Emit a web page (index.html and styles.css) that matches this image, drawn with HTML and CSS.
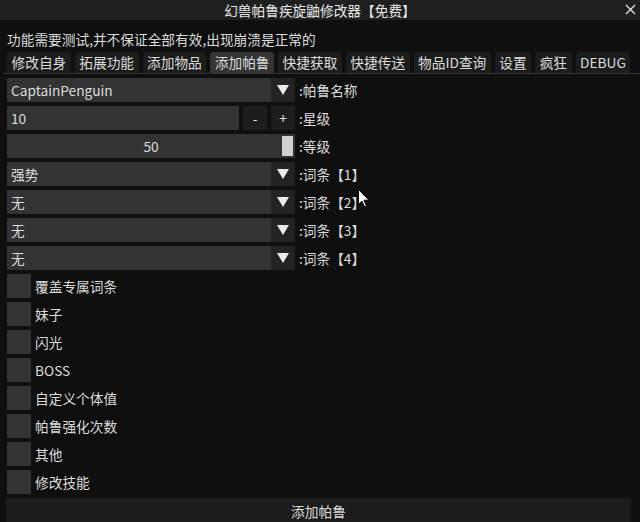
FILE: index.html
```html
<!DOCTYPE html>
<html lang="zh-CN">
<head>
  <meta charset="UTF-8" />
  <title>幻兽帕鲁疾旋鼬修改器【免费】</title>
  <link rel="stylesheet" href="styles.css">
</head>
<body>
  <div class="window">
    <div class="titlebar">
      <span class="title">幻兽帕鲁疾旋鼬修改器【免费】</span>
      <svg class="close" width="11" height="11" viewBox="0 0 11 11">
        <path d="M1 1 L10 10 M10 1 L1 10" stroke="#e6e6e6" stroke-width="1.3" fill="none"/>
      </svg>
    </div>

    <div class="content">
      <p class="notice">功能需要测试,并不保证全部有效,出现崩溃是正常的</p>

      <div class="tabs">
        <span class="tab">修改自身</span>
        <span class="tab">拓展功能</span>
        <span class="tab">添加物品</span>
        <span class="tab active">添加帕鲁</span>
        <span class="tab">快捷获取</span>
        <span class="tab">快捷传送</span>
        <span class="tab">物品ID查询</span>
        <span class="tab">设置</span>
        <span class="tab">疯狂</span>
        <span class="tab">DEBUG</span>
      </div>

      <div class="rows">
        <div class="row">
          <div class="combo"><span class="value">CaptainPenguin</span><span class="arrow"></span></div>
          <span class="label">:帕鲁名称</span>
        </div>
        <div class="row">
          <div class="stepper">
            <span class="input">10</span>
            <span class="btn">-</span>
            <span class="btn">+</span>
          </div>
          <span class="label">:星级</span>
        </div>
        <div class="row">
          <div class="slider"><span class="value">50</span><span class="grab"></span></div>
          <span class="label">:等级</span>
        </div>
        <div class="row">
          <div class="combo"><span class="value">强势</span><span class="arrow"></span></div>
          <span class="label">:词条【1】</span>
        </div>
        <div class="row">
          <div class="combo"><span class="value">无</span><span class="arrow"></span></div>
          <span class="label">:词条【2】</span>
        </div>
        <div class="row">
          <div class="combo"><span class="value">无</span><span class="arrow"></span></div>
          <span class="label">:词条【3】</span>
        </div>
        <div class="row">
          <div class="combo"><span class="value">无</span><span class="arrow"></span></div>
          <span class="label">:词条【4】</span>
        </div>

        <label class="check"><span class="box"></span>覆盖专属词条</label>
        <label class="check"><span class="box"></span>妹子</label>
        <label class="check"><span class="box"></span>闪光</label>
        <label class="check"><span class="box"></span>BOSS</label>
        <label class="check"><span class="box"></span>自定义个体值</label>
        <label class="check"><span class="box"></span>帕鲁强化次数</label>
        <label class="check"><span class="box"></span>其他</label>
        <label class="check"><span class="box"></span>修改技能</label>

        <div class="action">添加帕鲁</div>
      </div>
    </div>

    <!-- mouse pointer from the capture -->
    <svg class="cursor" width="12" height="19" viewBox="0 0 12 19">
      <path d="M0.5 0.5 L0.5 15.5 L4 12 L6.5 18 L8.5 17 L6 11.2 L11 11.2 Z" fill="#fff" stroke="#000" stroke-width="1"/>
    </svg>
  </div>
</body>
</html>
```

FILE: styles.css
```css
* { box-sizing: border-box; margin: 0; padding: 0 }
html, body {
  width: 100%; height: 100%;
  background: #0f0f0f;
  overflow: hidden;
}
body {
  font-family: "Noto Sans CJK SC", "Noto Sans", sans-serif;
  font-size: 13.7px;
  color: #dcdcdc;
}

.window {
  position: relative;
  width: 640px; height: 522px;
  overflow: hidden;
}

/*–––– Title bar ––––*/
.titlebar {
  position: relative;
  height: 20px;
  background: #1f1f1f;
  display: flex; align-items: center; justify-content: center;
  color: #e8e8e8;
}
.titlebar .title { line-height: 20px }
.titlebar .close {
  position: absolute; right: 4px; top: 4px;
}

/*–––– Content ––––*/
.content { padding: 0 5px 0 7px }
.notice {
  margin-top: 9px;
  height: 20px; line-height: 20px;
}

.tabs {
  display: flex; gap: 4px;
  margin: 3px -5px 0 -4px;
  padding-left: 4px;
  border-bottom: 1px solid #353535;
}
.tab {
  height: 21px; line-height: 21px;
  padding: 0 4.5px;
  background: #1c1c1c;
  border-radius: 4px 4px 0 0;
  white-space: nowrap;
}
.tab.active { background: #353535 }

.rows {
  display: flex; flex-direction: column; gap: 4px;
  margin-top: 4px;
}
.row {
  display: flex; align-items: center; gap: 4px;
  height: 24px;
}
.label { white-space: nowrap }

/*–––– Combo ––––*/
.combo {
  display: flex; width: 288px; height: 24px;
}
.combo .value {
  flex: 1;
  background: #333333;
  padding-left: 4px;
  line-height: 25px;
}
.combo .arrow {
  width: 24px; height: 24px;
  background: #232323;
  display: flex; align-items: center; justify-content: center;
}
.combo .arrow::after {
  content: '';
  border-left: 6px solid transparent;
  border-right: 6px solid transparent;
  border-top: 10px solid #ececec;
}

/*–––– Stepper ––––*/
.stepper { display: flex; gap: 4px; width: 288px; height: 24px }
.stepper .input {
  flex: 1; background: #333333;
  padding-left: 4px; line-height: 25px;
}
.stepper .btn {
  width: 24px; background: #1d1d1d;
  text-align: center; line-height: 24px;
}

/*–––– Slider ––––*/
.slider {
  position: relative;
  width: 288px; height: 24px;
  background: #333333;
  text-align: center; line-height: 25px;
}
.slider .grab {
  position: absolute; right: 2px; top: 2px;
  width: 11px; height: 20px;
  background: #cfcfcf;
}

/*–––– Checkboxes ––––*/
.check {
  display: flex; align-items: center; gap: 4px;
  height: 24px;
}
.check .box {
  width: 24px; height: 24px;
  background: #333333;
}

.action {
  width: 625px; height: 24px;
  margin-left: -1px;
  background: #1c1c1c;
  text-align: center; line-height: 26px;
}

.cursor {
  position: absolute; left: 358px; top: 189px;
}
```
